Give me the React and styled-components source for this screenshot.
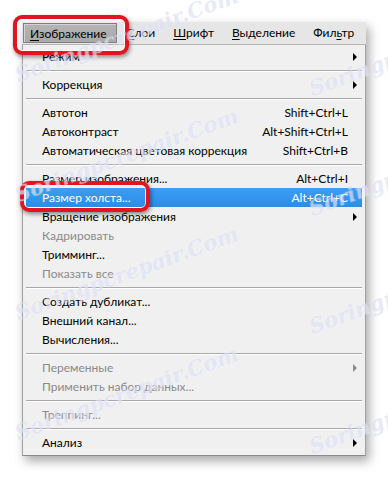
import React from "react";
import styled, { createGlobalStyle } from "styled-components";

const GlobalStyle = createGlobalStyle`
  html, body {
    margin: 0;
    background: #ffffff;
  }
  body {
    font-family: Lato, "Liberation Sans", sans-serif;
    font-size: 12px;
  }
`;

const barItems = [
  { text: "Изображение", key: 0, active: true },
  { text: "Слои", key: 0 },
  { text: "Шрифт", key: 0 },
  { text: "Выделение", key: 0 },
  { text: "Фильтр", key: 3 },
  { text: "3D", key: 0 },
];

const menu = [
  { label: "Режим", sub: true },
  "sep",
  { label: "Коррекция", sub: true },
  "sep",
  { label: "Автотон", shortcut: "Shift+Ctrl+L" },
  { label: "Автоконтраст", shortcut: "Alt+Shift+Ctrl+L" },
  { label: "Автоматическая цветовая коррекция", shortcut: "Shift+Ctrl+B" },
  "sep",
  { label: "Размер изображения...", shortcut: "Alt+Ctrl+I" },
  { label: "Размер холста...", shortcut: "Alt+Ctrl+C", active: true },
  { label: "Вращение изображения", sub: true },
  { label: "Кадрировать", disabled: true },
  { label: "Тримминг..." },
  { label: "Показать все", disabled: true },
  "sep",
  { label: "Создать дубликат..." },
  { label: "Внешний канал..." },
  { label: "Вычисления..." },
  "sep",
  { label: "Переменные", sub: true, disabled: true },
  { label: "Применить набор данных...", disabled: true },
  "sep",
  { label: "Треппинг...", disabled: true },
  "sep",
  { label: "Анализ", sub: true },
];

// faint diagonal watermark repeated over the screenshot
const watermarks = [
  { x: 20, y: 62 }, { x: 314, y: 76 },
  { x: 20, y: 182 }, { x: 314, y: 196 },
  { x: 20, y: 300 }, { x: 314, y: 314 },
  { x: 20, y: 420 }, { x: 314, y: 434 },
];

const Mnemonic = ({ text, at }) => (
  <>
    {text.slice(0, at)}
    <u>{text[at]}</u>
    {text.slice(at + 1)}
  </>
);

const App = () => {
  return (
    <>
      <GlobalStyle />
      <Page>
        <Frame>
          <Bar>
            {barItems.map((b) => (
              <BarItem key={b.text} $active={b.active}>
                <Mnemonic text={b.text} at={b.key} />
              </BarItem>
            ))}
          </Bar>
          <Menu>
            {menu.map((m, i) =>
              m === "sep" ? (
                <Separator key={i} />
              ) : (
                <Item key={i} $active={m.active} $disabled={m.disabled}>
                  <Label>{m.label}</Label>
                  {m.shortcut && <Shortcut>{m.shortcut}</Shortcut>}
                  <ArrowCell>{m.sub && <Arrow $disabled={m.disabled} />}</ArrowCell>
                </Item>
              )
            )}
          </Menu>
          <Callout $top={-7} $left={-9} $width={116} $height={40} />
          <Callout $top={159} $left={-2} $width={130} $height={31} />
        </Frame>
        {watermarks.map((w, i) => (
          <Watermark key={i} style={{ left: w.x, top: w.y }}>
            Soringpcrepair.Com
          </Watermark>
        ))}
      </Page>
    </>
  );
};

export default App;

// ---------- Styled Components ----------

const Page = styled.div`
  position: relative;
  width: 388px;
  height: 479px;
  overflow: hidden;
  padding: 22px 0 0 22px;
  box-sizing: border-box;
`;

const Frame = styled.div`
  position: relative;
  width: 344px;
  box-shadow: 3px 5px 10px rgba(0, 0, 0, 0.35);
`;

const Bar = styled.div`
  display: flex;
  align-items: center;
  height: 22px;
  padding-left: 1px;
  background: #e6e6e6;
  border-bottom: 1px solid #b4b4b4;
  overflow: hidden;
  white-space: nowrap;
  color: #000;
`;

const BarItem = styled.div`
  flex: 0 0 auto;
  height: 20px;
  line-height: 19px;
  box-sizing: border-box;
  padding: ${(p) => (p.$active ? "0 10px 0 6px" : "0 9px")};
  background: ${(p) => (p.$active ? "linear-gradient(#b4b4b4, #a9a9a9)" : "transparent")};
  border: ${(p) => (p.$active ? "1px solid #808080" : "none")};
  box-shadow: ${(p) => (p.$active ? "inset 1px 1px 0 #d2d2d2" : "none")};

  u {
    text-decoration-thickness: 1px;
    text-underline-offset: 2px;
  }
`;

const Menu = styled.div`
  display: flex;
  flex-direction: column;
  padding: 2px 0 3px;
  background: #f0f0f0;
  border-left: 1px solid #a0a0a0;
  border-right: 1px solid #a0a0a0;
  border-bottom: 1px solid #8c8c8c;
`;

const Item = styled.div`
  display: flex;
  align-items: center;
  height: 19px;
  margin: 0 3px;
  padding-left: 16px;
  white-space: nowrap;
  color: ${(p) => (p.$active ? "#ffffff" : p.$disabled ? "#8a8a8a" : "#000000")};
  background: ${(p) => (p.$active ? "linear-gradient(#3b9ef6, #2c8ce6)" : "transparent")};
`;

const Label = styled.span`
  flex: 1;
`;

const Shortcut = styled.span`
  flex: 0 0 auto;
`;

const ArrowCell = styled.span`
  flex: 0 0 14px;
  display: flex;
  align-items: center;
  padding-left: 5px;
  box-sizing: border-box;
`;

const Arrow = styled.span`
  width: 0;
  height: 0;
  border-top: 4px solid transparent;
  border-bottom: 4px solid transparent;
  border-left: 4px solid ${(p) => (p.$disabled ? "#8a8a8a" : "#000")};
`;

const Separator = styled.div`
  height: 1px;
  margin: 4px 3px;
  background: #a8a8a8;
  box-shadow: 0 1px 0 #ffffff;
`;

const Callout = styled.div`
  position: absolute;
  top: ${(p) => p.$top}px;
  left: ${(p) => p.$left}px;
  width: ${(p) => p.$width}px;
  height: ${(p) => p.$height}px;
  box-sizing: border-box;
  border: 4px solid #e3141f;
  border-radius: 9px;
  box-shadow: 1px 2px 4px rgba(0, 0, 0, 0.45), inset 0 0 0 1px rgba(255, 255, 255, 0.85);
  pointer-events: none;
`;

const Watermark = styled.div`
  position: absolute;
  transform: rotate(-20deg);
  transform-origin: left bottom;
  font-family: "DejaVu Serif", serif;
  font-style: italic;
  font-weight: bold;
  font-size: 21px;
  color: rgba(175, 180, 235, 0.3);
  text-shadow: 0 0 1px rgba(255, 255, 255, 0.6);
  white-space: nowrap;
  pointer-events: none;
`;
